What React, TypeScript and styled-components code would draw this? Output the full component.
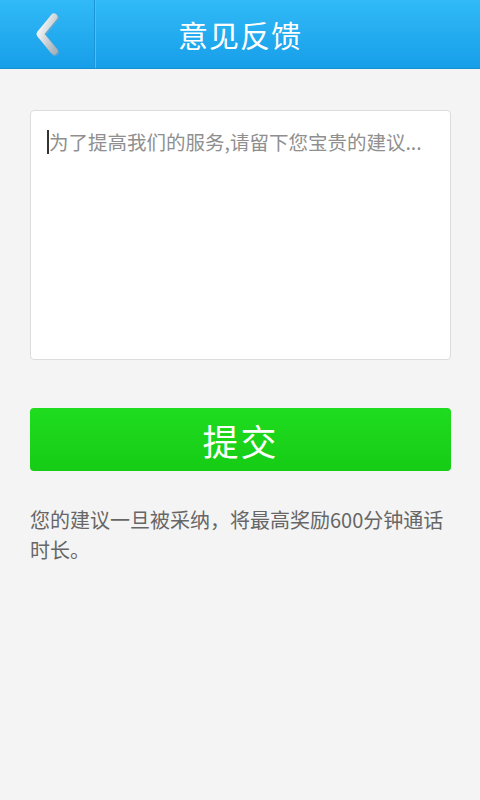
import React from "react";
import styled, { createGlobalStyle } from "styled-components";

const GlobalStyle = createGlobalStyle`
  html, body {
    margin: 0;
    padding: 0;
    background: #f4f4f4;
  }
  body {
    font-family: "Noto Sans CJK SC", "Noto Sans", sans-serif;
  }
`;

const Page = styled.div`
  width: 480px;
  min-height: 800px;
  background: #f4f4f4;
`;

const TopBar = styled.header`
  height: 68px;
  display: flex;
  align-items: stretch;
  background: linear-gradient(to bottom, #31baf7, #179ee9);
  border-bottom: 1px solid #1590d6;
  position: relative;
`;

const BackButton = styled.button`
  width: 95px;
  border: none;
  background: transparent;
  border-right: 1px solid #1a93d9;
  box-shadow: 1px 0 0 #45c3f8;
  display: flex;
  align-items: center;
  justify-content: center;
  padding: 0 0 0 0;
`;

const Title = styled.h1`
  position: absolute;
  left: 0;
  right: 0;
  top: 0;
  bottom: 0;
  margin: 0;
  display: flex;
  align-items: center;
  justify-content: center;
  color: #fff;
  font-size: 30px;
  font-weight: 400;
  letter-spacing: 1px;
  pointer-events: none;
`;

const Body = styled.main`
  padding: 41px 29px 0 30px;
  display: flex;
  flex-direction: column;
`;

const FeedbackBox = styled.div`
  height: 250px;
  background: #fff;
  border: 1px solid #dcdcdc;
  border-radius: 4px;
  padding: 16px 16px;
  box-sizing: border-box;
  display: flex;
  align-items: flex-start;
`;

const Caret = styled.span`
  width: 2px;
  height: 24px;
  background: #333;
  margin-top: 3px;
`;

const Placeholder = styled.span`
  font-size: 19.5px;
  line-height: 30px;
  color: #8f8f8f;
`;

const SubmitButton = styled.button`
  margin-top: 48px;
  height: 63px;
  border: none;
  border-radius: 4px;
  background: linear-gradient(to bottom, #1fdc1f, #16cc16);
  color: #fff;
  font-size: 36px;
  font-family: inherit;
  letter-spacing: 2px;
`;

const Notice = styled.p`
  margin: 34px 0 0;
  font-size: 20px;
  line-height: 30px;
  color: #666;
`;

const Chevron = () => (
  <svg width="30" height="44" viewBox="0 0 30 44">
    <defs>
      <linearGradient id="chev" x1="0" y1="0" x2="1" y2="1">
        <stop offset="0" stopColor="#ffffff" />
        <stop offset="1" stopColor="#a9b4bc" />
      </linearGradient>
    </defs>
    <path
      d="M22 5 L8 22 L22 39"
      fill="none"
      stroke="#7aa6c4"
      strokeWidth="8"
      strokeLinecap="round"
      strokeLinejoin="round"
      transform="translate(1 1)"
      opacity="0.6"
    />
    <path
      d="M22 5 L8 22 L22 39"
      fill="none"
      stroke="url(#chev)"
      strokeWidth="7"
      strokeLinecap="round"
      strokeLinejoin="round"
    />
  </svg>
);

export default function App() {
  return (
    <Page>
      <GlobalStyle />
      <TopBar>
        <BackButton aria-label="返回">
          <Chevron />
        </BackButton>
        <Title>意见反馈</Title>
      </TopBar>
      <Body>
        <FeedbackBox>
          <Caret />
          <Placeholder>为了提高我们的服务,请留下您宝贵的建议...</Placeholder>
        </FeedbackBox>
        <SubmitButton>提交</SubmitButton>
        <Notice>您的建议一旦被采纳，将最高奖励600分钟通话时长。</Notice>
      </Body>
    </Page>
  );
}
